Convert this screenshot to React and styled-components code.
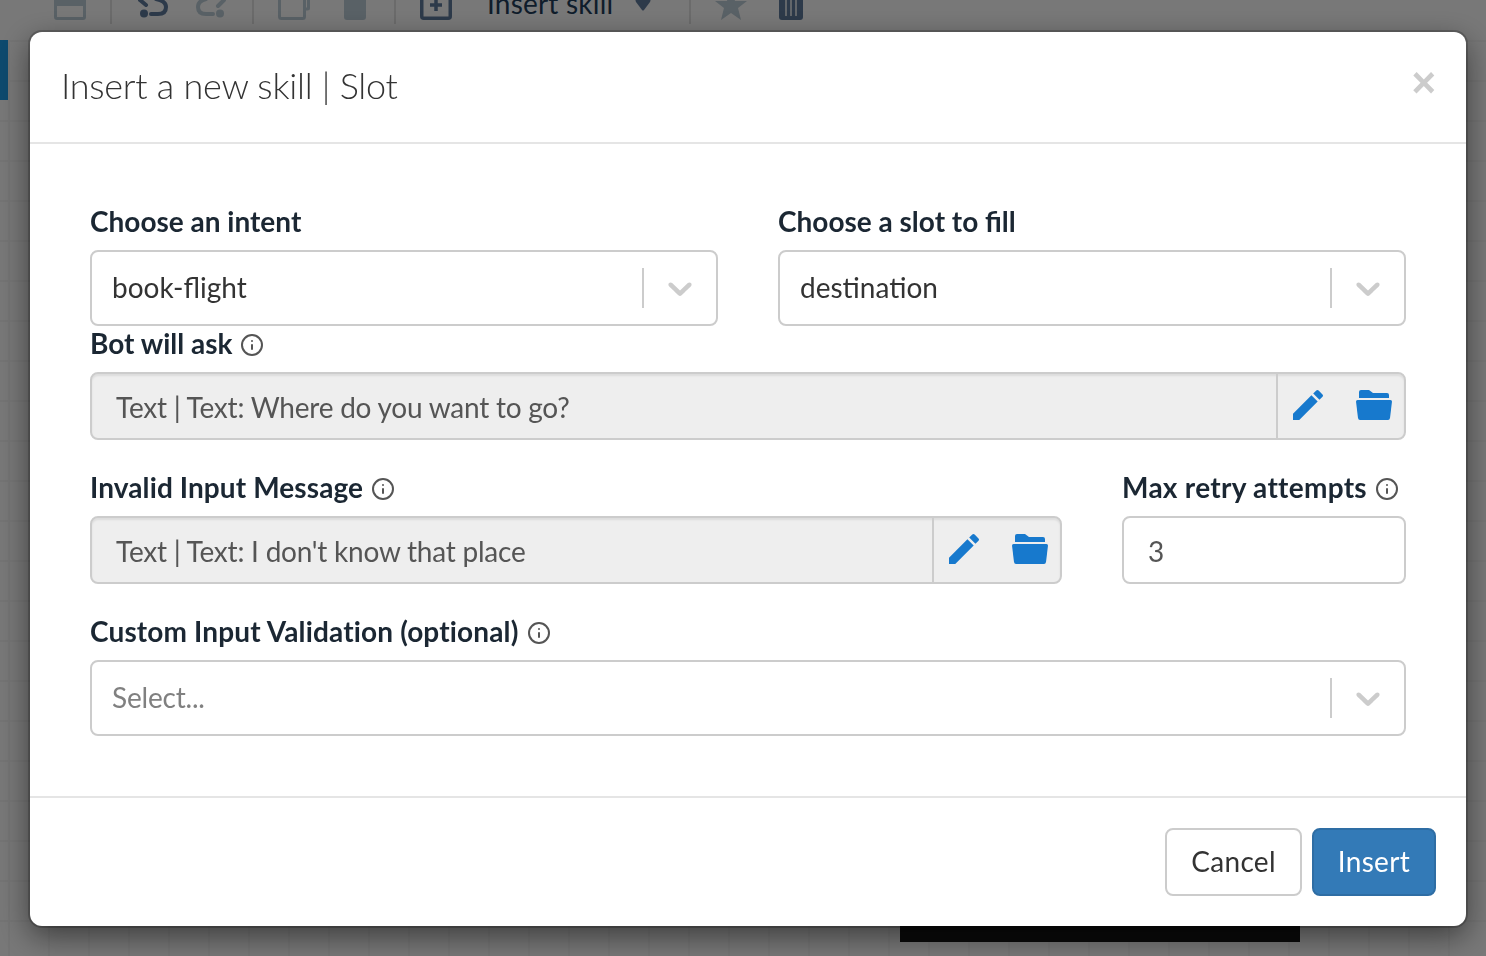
import React from 'react';
import styled, { createGlobalStyle } from 'styled-components';
import { MdEdit } from 'react-icons/md';
import { Info } from 'lucide-react';

const GlobalStyle = createGlobalStyle`
  html, body {
    height: 100%;
    margin: 0;
    overflow: hidden;
  }

  body {
    font-family: Lato, "Liberation Sans", sans-serif;
  }

  #root {
    height: 100%;
  }

  * {
    box-sizing: border-box;
  }
`;

const Page = styled.div`
  height: 100%;
  display: flex;
  flex-direction: column;
  background: #f0f0f0;
`;

// the editor is scrolled a little, so the toolbar is cut by the window's top
const Toolbar = styled.div`
  height: 60px;
  margin-top: -20px;
  flex: none;
  display: flex;
  align-items: flex-start;
`;

const ToolGroup = styled.div`
  height: 44px;
  width: ${p => p.$width}px;
  flex: none;
  display: flex;
  align-items: flex-end;
  padding-bottom: 4px;
  border-right: ${p => (p.$last ? 'none' : '2px solid #d6d6d6')};
`;

const ToolIcon = styled.svg`
  display: block;
  flex: none;
  height: 32px;
  width: ${p => p.$width}px;
  margin-left: ${p => p.$gap}px;
`;

const ToolLabel = styled.span`
  flex: none;
  margin-left: 35px;
  margin-bottom: -1px;
  font-size: 28px;
  line-height: 36px;
  letter-spacing: 0.2px;
  color: #1e3a56;
`;

const Canvas = styled.div`
  flex: 1;
  position: relative;
  background-image:
    linear-gradient(#e9e9e9 2px, transparent 2px),
    linear-gradient(90deg, #e9e9e9 2px, transparent 2px);
  background-size: 40px 40px;
  background-position: 8px 0;
`;

const SideTab = styled.div`
  position: absolute;
  left: 0;
  top: 0;
  width: 8px;
  height: 60px;
  background: #1c94dc;
`;

const CanvasNode = styled.div`
  position: absolute;
  left: 900px;
  top: 886px;
  width: 400px;
  height: 16px;
  background: #141414;
`;

const Backdrop = styled.div`
  position: fixed;
  inset: 0;
  background: rgba(0, 0, 0, 0.5);
`;

const Modal = styled.div`
  width: 1436px;
  height: 894px;
  margin: 32px 0 0 30px;
  display: flex;
  flex-direction: column;
  background: #fff;
  border-radius: 12px;
  box-shadow: 0 0 0 2px rgba(0, 0, 0, 0.2), 0 10px 30px rgba(0, 0, 0, 0.5);
`;

const Header = styled.div`
  height: 112px;
  flex: none;
  display: flex;
  justify-content: space-between;
  align-items: flex-start;
  padding: 30px 30px 0 31px;
  border-bottom: 2px solid #e5e5e5;
`;

const Title = styled.h4`
  margin: -2px 0 0;
  font-size: 36px;
  font-weight: 300;
  line-height: 50px;
  letter-spacing: -0.28px;
  color: #333;
`;

const Close = styled.button`
  padding: 0;
  border: none;
  background: none;
  font-family: "Liberation Sans", sans-serif;
  font-size: 42px;
  font-weight: 700;
  line-height: 42px;
  color: #ccc;
`;

const Body = styled.div`
  flex: 1;
  display: flex;
  flex-direction: column;
  gap: 30px;
  padding: 60px 60px 0;
`;

const Row = styled.div`
  display: flex;
  gap: 60px;
`;

const Field = styled.div`
  flex: ${p => p.$flex || 1} 1 0;
  min-width: 0;
`;

const TightField = styled(Field)`
  margin-top: -30px;
`;

const Label = styled.label`
  height: 36px;
  margin-bottom: 10px;
  padding-bottom: 2px;
  display: flex;
  align-items: center;
  gap: 8px;
  font-size: 28px;
  font-weight: 700;
  line-height: 34px;
  letter-spacing: ${p => p.$track || 0}px;
  color: #1b2733;
`;

const InfoIcon = styled(Info)`
  flex: none;
  width: 24px;
  height: 24px;
  margin-top: 4px;
  color: #555;
`;

const Select = styled.div`
  height: 76px;
  display: flex;
  align-items: center;
  border: 2px solid #ccc;
  border-radius: 8px;
  background: #fff;
`;

const SelectValue = styled.div`
  flex: 1;
  padding: 0 0 2px 20px;
  font-size: 28px;
  line-height: 40px;
  letter-spacing: ${p => (p.$placeholder ? '-0.2px' : '0')};
  color: ${p => (p.$placeholder ? '#808080' : '#333')};
`;

const Separator = styled.span`
  width: 2px;
  height: 40px;
  flex: none;
  background: #ccc;
`;

const Chevron = styled.svg`
  display: block;
  flex: none;
  box-sizing: content-box;
  width: 40px;
  height: 40px;
  padding: 16px;
  fill: #ccc;
`;

const InputGroup = styled.div`
  height: 68px;
  display: flex;
  border: 2px solid #ccc;
  border-radius: 8px;
  background: #eee;
  box-shadow: inset 0 2px 2px rgba(0, 0, 0, 0.075);
`;

const ReadOnlyText = styled.div`
  flex: 1;
  padding: 13px 0 0 24px;
  font-size: 28px;
  line-height: 40px;
  letter-spacing: -0.23px;
  color: #555;
`;

const Addon = styled.div`
  width: 128px;
  flex: none;
  display: flex;
  align-items: center;
  padding-left: 10px;
  border-left: 2px solid #ccc;
`;

const EditIcon = styled(MdEdit)`
  flex: none;
  width: 40px;
  height: 40px;
  margin-top: -3px;
  color: #1779cd;
`;

const FolderIcon = styled.svg`
  flex: none;
  width: 36px;
  height: 30px;
  margin: -2px 0 0 28px;
  fill: #1779cd;
`;

const NumberInput = styled.div`
  height: 68px;
  padding: 13px 24px 0;
  border: 2px solid #ccc;
  border-radius: 8px;
  font-size: 28px;
  line-height: 40px;
  color: #555;
`;

const Footer = styled.div`
  flex: none;
  display: flex;
  justify-content: flex-end;
  gap: 10px;
  padding: 30px;
  border-top: 2px solid #e5e5e5;
`;

const Button = styled.button`
  height: 68px;
  padding: 0 24px 2px;
  border: 2px solid ${p => (p.$primary ? '#2e6da4' : '#ccc')};
  border-radius: 8px;
  background: ${p => (p.$primary ? '#337ab7' : '#fff')};
  font-family: inherit;
  font-size: 28px;
  letter-spacing: 0.3px;
  color: ${p => (p.$primary ? '#fff' : '#333')};
`;

const DARK = '#5a7494';
const PALE = '#b2c2cc';

const ChevronDown = () => (
  <Chevron viewBox="0 0 20 20">
    <path d="M4.516 7.548c0.436-0.446 1.043-0.481 1.576 0l3.908 3.747 3.908-3.747c0.533-0.481 1.141-0.446 1.576 0 0.436 0.445 0.408 1.197 0 1.615-0.406 0.418-4.695 4.502-4.695 4.502-0.217 0.223-0.502 0.335-0.789 0.335s-0.572-0.112-0.791-0.335c0 0-4.287-4.084-4.695-4.502s-0.436-1.17 0-1.615z" />
  </Chevron>
);

const Folder = () => (
  <FolderIcon viewBox="0 0 36 30">
    <path d="M3 8V2q0-2 2-2h8l4 3h14q2 0 2 2v3z" />
    <path d="M1.500 10h33q1.500 0 1.500 1.500L34 28q-.3 2-2 2H4q-1.700 0-2-2L0 11.500Q0 10 1.500 10z" />
  </FolderIcon>
);

const Actions = () => (
  <Addon>
    <EditIcon />
    <Folder />
  </Addon>
);

const App = () => (
  <>
    <GlobalStyle />
    <Page>
      <Toolbar>
        <ToolGroup $width={112}>
          <ToolIcon $width={32} $gap={54} viewBox="0 0 32 32" fill={PALE}>
            <path d="M3 0h26q3 0 3 3v26q0 3-3 3H3q-3 0-3-3V3q0-3 3-3zm0 18v11h26V18z" fillRule="evenodd" />
          </ToolIcon>
        </ToolGroup>
        <ToolGroup $width={142}>
          <ToolIcon $width={30} $gap={26} viewBox="0 0 30 32" fill="none" stroke={DARK} strokeWidth="4" strokeLinecap="round">
            <circle cx="6" cy="25.500" r="4" fill={DARK} stroke="none" />
            <path d="M13 26h7q8 0 8-7 0-6-10-8" />
            <path d="M2 12l6 5" />
          </ToolIcon>
          <ToolIcon $width={30} $gap={28} viewBox="0 0 30 32" fill="none" stroke={PALE} strokeWidth="4" strokeLinecap="round">
            <circle cx="24" cy="25.500" r="4" fill={PALE} stroke="none" />
            <path d="M17 26h-7q-8 0-8-7 0-6 8-8" />
            <path d="M28 12l-6 6" />
          </ToolIcon>
        </ToolGroup>
        <ToolGroup $width={142}>
          <ToolIcon $width={32} $gap={24} viewBox="0 0 32 32" fill="none" stroke={PALE} strokeWidth="3">
            <rect x="1.500" y="1.500" width="25" height="29" rx="2" />
            <path d="M30.500 6v14q0 1-1 1H27" />
          </ToolIcon>
          <ToolIcon $width={22} $gap={34} viewBox="0 0 22 32" fill={PALE}>
            <rect width="22" height="32" rx="3" />
          </ToolIcon>
        </ToolGroup>
        <ToolGroup $width={295}>
          <ToolIcon $width={32} $gap={24} viewBox="0 0 32 32" fill="none" stroke={DARK} strokeWidth="3.500">
            <rect x="1.750" y="1.750" width="28.500" height="28.500" rx="2" />
            <path d="M16 11v12M10 17h12" />
          </ToolIcon>
          <ToolLabel>Insert skill</ToolLabel>
          <ToolIcon $width={16} $gap={22} viewBox="0 0 16 32" fill={DARK}>
            <path d="M1 11h14q1 1 0 3l-6 8q-1 1-2 0l-6-8q-1-2 0-3z" />
          </ToolIcon>
        </ToolGroup>
        <ToolGroup $last $width={200}>
          <ToolIcon $width={32} $gap={24} viewBox="0 0 32 32" fill={PALE}>
            <path d="M16 0l4 13h12l-9 7 3 12-10-7-10 7 3-12-9-7h12z" />
          </ToolIcon>
          <ToolIcon $width={24} $gap={32} viewBox="0 0 24 32">
            <rect width="24" height="32" rx="3" fill={DARK} />
            <path d="M7 8v20M12 8v20M17 8v20" stroke="#c4ccd4" strokeWidth="2" />
          </ToolIcon>
        </ToolGroup>
      </Toolbar>
      <Canvas>
        <SideTab />
        <CanvasNode />
      </Canvas>
    </Page>
    <Backdrop>
      <Modal>
        <Header>
          <Title>Insert a new skill | Slot</Title>
          <Close>×</Close>
        </Header>
        <Body>
          <Row>
            <Field>
              <Label>Choose an intent</Label>
              <Select>
                <SelectValue>book-flight</SelectValue>
                <Separator />
                <ChevronDown />
              </Select>
            </Field>
            <Field>
              <Label>Choose a slot to fill</Label>
              <Select>
                <SelectValue>destination</SelectValue>
                <Separator />
                <ChevronDown />
              </Select>
            </Field>
          </Row>
          <Row>
            <TightField>
              <Label>Bot will ask <InfoIcon /></Label>
              <InputGroup>
                <ReadOnlyText>Text | Text: Where do you want to go?</ReadOnlyText>
                <Actions />
              </InputGroup>
            </TightField>
          </Row>
          <Row>
            <Field $flex={972}>
              <Label $track={0.1}>Invalid Input Message <InfoIcon /></Label>
              <InputGroup>
                <ReadOnlyText>Text | Text: I don't know that place</ReadOnlyText>
                <Actions />
              </InputGroup>
            </Field>
            <Field $flex={284}>
              <Label $track={0.28}>Max retry attempts <InfoIcon /></Label>
              <NumberInput>3</NumberInput>
            </Field>
          </Row>
          <Row>
            <Field>
              <Label $track={0.15}>Custom Input Validation (optional) <InfoIcon /></Label>
              <Select>
                <SelectValue $placeholder>Select...</SelectValue>
                <Separator />
                <ChevronDown />
              </Select>
            </Field>
          </Row>
        </Body>
        <Footer>
          <Button>Cancel</Button>
          <Button $primary>Insert</Button>
        </Footer>
      </Modal>
    </Backdrop>
  </>
);

export default App;
